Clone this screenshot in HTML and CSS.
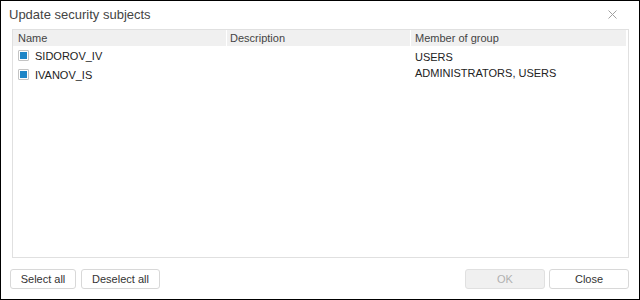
FILE: index.html
```html
<!DOCTYPE html>
<html lang="en">
<head>
    <meta charset="UTF-8">
    <title>Update security subjects</title>
    <link rel="stylesheet" href="styles.css">
</head>
<body>
    <div class="dialog">
        <div class="dialog-header">
            <span class="dialog-title">Update security subjects</span>
            <span class="dialog-close">
                <svg width="9" height="9" viewBox="0 0 9 9"><path d="M0.5 0.5 L8.5 8.5 M8.5 0.5 L0.5 8.5" stroke="#a0a0a0" stroke-width="1"/></svg>
            </span>
        </div>
        <div class="grid">
            <div class="grid-head">
                <div class="cell col-name">Name</div>
                <div class="cell col-desc">Description</div>
                <div class="cell col-group">Member of group</div>
            </div>
            <div class="grid-row">
                <div class="cell col-name"><span class="check"><span class="check-mark"></span></span>SIDOROV_IV</div>
                <div class="cell col-desc"></div>
                <div class="cell col-group group-down">USERS</div>
            </div>
            <div class="grid-row">
                <div class="cell col-name"><span class="check"><span class="check-mark"></span></span>IVANOV_IS</div>
                <div class="cell col-desc"></div>
                <div class="cell col-group group-up">ADMINISTRATORS, USERS</div>
            </div>
        </div>
        <div class="dialog-footer">
            <button class="btn btn-select">Select all</button>
            <button class="btn btn-deselect">Deselect all</button>
            <span class="spacer"></span>
            <button class="btn btn-ok" disabled>OK</button>
            <button class="btn btn-close">Close</button>
        </div>
    </div>
</body>
</html>
```

FILE: styles.css
```css
html, body {
    margin: 0;
    padding: 0;
    background: #ffffff;
}
body {
    font-family: "Liberation Sans", Arial, sans-serif;
    font-size: 11px;
    color: #333;
}
.dialog {
    box-sizing: border-box;
    width: 640px;
    height: 300px;
    border: 1px solid #000;
    display: flex;
    flex-direction: column;
    background: #fff;
}
.dialog-header {
    height: 28px;
    display: flex;
    align-items: center;
    padding: 0 10px 0 8px;
}
.dialog-title {
    flex: 1;
    font-size: 13px;
    color: #444;
    margin-top: -2px;
}
.dialog-close {
    width: 9px;
    height: 9px;
    margin-right: 12px;
    margin-top: -2px;
    display: flex;
}
.grid {
    box-sizing: border-box;
    height: 229px;
    margin: 0 10px 0 11px;
    border: 1px solid #e0e0e0;
    padding-right: 2px;
}
.grid-head {
    display: flex;
    height: 16px;
    background: #f0f0f0;
    color: #444;
}
.grid-head .cell + .cell {
    border-left: 1px solid #fff;
}
.cell {
    box-sizing: border-box;
    display: flex;
    align-items: center;
    padding-left: 4px;
    white-space: nowrap;
}
.col-name {
    width: 213px;
    padding-left: 5px;
}
.col-desc {
    width: 184px;
    padding-left: 3px;
}
.col-group {
    flex: 1;
}
.grid-row {
    display: flex;
    height: 19px;
    color: #222;
}
.grid-row:first-of-type {
    margin-top: 1px;
}
.grid-row .col-name {
    padding-left: 5px;
}
.grid-row .col-desc,
.grid-row .col-group {
    border-left: 1px solid transparent;
}
.group-down {
    padding-top: 2px;
}
.group-up {
    padding-bottom: 4px;
}
.check {
    box-sizing: border-box;
    width: 11px;
    height: 11px;
    border: 1px solid #c4c4c4;
    border-radius: 1px;
    padding: 1px;
    margin-right: 6px;
    display: flex;
}
.check-mark {
    flex: 1;
    background: #1f86c7;
}
.dialog-footer {
    display: flex;
    align-items: center;
    gap: 5px;
    padding: 11px 10px 0 9px;
}
.spacer {
    flex: 1;
}
.btn {
    box-sizing: border-box;
    height: 20px;
    border: 1px solid #d8d8d8;
    border-radius: 3px;
    background: #fff;
    color: #333;
    font-family: "Liberation Sans", Arial, sans-serif;
    font-size: 11px;
    padding: 0;
    margin: 0;
}
.btn-select {
    width: 66px;
}
.btn-deselect {
    width: 79px;
}
.btn-ok {
    width: 80px;
    background: #f0f0f0;
    color: #b0b0b0;
    border-color: #e0e0e0;
    margin-right: -1px;
}
.btn-close {
    width: 80px;
}
```
